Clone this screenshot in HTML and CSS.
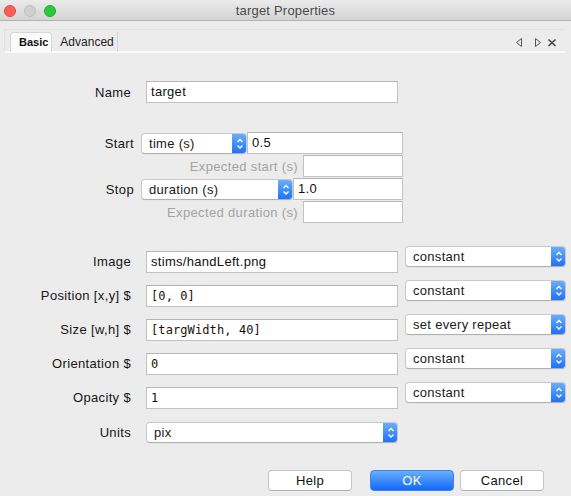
FILE: index.html
```html
<!DOCTYPE html>
<html>
<head>
<meta charset="utf-8">
<link rel="stylesheet" href="styles.css">
</head>
<body>
<div class="window">
  <header class="titlebar">
    <div class="lights">
      <span class="light red"></span>
      <span class="light gray"></span>
      <span class="light green"></span>
    </div>
    <div class="title">target Properties</div>
    <div></div>
  </header>

  <div class="tabbar">
    <div class="tabs">
      <div class="tab active">Basic</div>
      <div class="tab">Advanced</div>
    </div>
    <svg class="tabctl" width="45" height="12" viewBox="0 0 45 12">
      <polygon points="7.5,2.5 2.5,6.5 7.5,10.5" fill="none" stroke="#555" stroke-width="1"/>
      <polygon points="21.5,2.5 26.5,6.5 21.5,10.5" fill="none" stroke="#555" stroke-width="1"/>
      <path d="M34.5 3.5 L41.5 10 M41.5 3.5 L34.5 10" stroke="#444" stroke-width="1.6" fill="none"/>
    </svg>
  </div>

  <main class="form">
    <div class="row name-row">
      <label class="lbl w131">Name</label>
      <div class="input w252">target</div>
    </div>

    <div class="timing">
      <div class="row trow">
        <label class="lbl w134">Start</label>
        <div class="select s-start"><span class="stext">time (s)</span><span class="arrow"><svg width="14" height="21" viewBox="0 0 14 21"><path d="M4.5 9 L7 6.5 L9.5 9 M4.5 12.5 L7 15 L9.5 12.5" fill="none" stroke="#fff" stroke-width="1.3"/></svg></span></div>
        <div class="input i-start">0.5</div>
      </div>
      <div class="row trow">
        <label class="lbl w298 dim">Expected start (s)</label>
        <div class="input w100"></div>
      </div>
      <div class="row trow">
        <label class="lbl w134">Stop</label>
        <div class="select s-stop"><span class="stext">duration (s)</span><span class="arrow"><svg width="14" height="21" viewBox="0 0 14 21"><path d="M4.5 9 L7 6.5 L9.5 9 M4.5 12.5 L7 15 L9.5 12.5" fill="none" stroke="#fff" stroke-width="1.3"/></svg></span></div>
        <div class="input i-stop">1.0</div>
      </div>
      <div class="row trow">
        <label class="lbl w298 dim">Expected duration (s)</label>
        <div class="input w100"></div>
      </div>
    </div>

    <div class="params">
      <div class="prow">
        <label class="lbl w131">Image</label>
        <div class="input w252">stims/handLeft.png</div>
        <div class="select w161"><span class="stext">constant</span><span class="arrow"><svg width="14" height="21" viewBox="0 0 14 21"><path d="M4.5 9 L7 6.5 L9.5 9 M4.5 12.5 L7 15 L9.5 12.5" fill="none" stroke="#fff" stroke-width="1.3"/></svg></span></div>
      </div>
      <div class="prow">
        <label class="lbl w131">Position [x,y] $</label>
        <div class="input w252 mono">[0, 0]</div>
        <div class="select w161"><span class="stext">constant</span><span class="arrow"><svg width="14" height="21" viewBox="0 0 14 21"><path d="M4.5 9 L7 6.5 L9.5 9 M4.5 12.5 L7 15 L9.5 12.5" fill="none" stroke="#fff" stroke-width="1.3"/></svg></span></div>
      </div>
      <div class="prow">
        <label class="lbl w131">Size [w,h] $</label>
        <div class="input w252 mono">[targWidth, 40]</div>
        <div class="select w161"><span class="stext">set every repeat</span><span class="arrow"><svg width="14" height="21" viewBox="0 0 14 21"><path d="M4.5 9 L7 6.5 L9.5 9 M4.5 12.5 L7 15 L9.5 12.5" fill="none" stroke="#fff" stroke-width="1.3"/></svg></span></div>
      </div>
      <div class="prow">
        <label class="lbl w131">Orientation $</label>
        <div class="input w252 mono">0</div>
        <div class="select w161"><span class="stext">constant</span><span class="arrow"><svg width="14" height="21" viewBox="0 0 14 21"><path d="M4.5 9 L7 6.5 L9.5 9 M4.5 12.5 L7 15 L9.5 12.5" fill="none" stroke="#fff" stroke-width="1.3"/></svg></span></div>
      </div>
      <div class="prow">
        <label class="lbl w131">Opacity $</label>
        <div class="input w252 mono">1</div>
        <div class="select w161"><span class="stext">constant</span><span class="arrow"><svg width="14" height="21" viewBox="0 0 14 21"><path d="M4.5 9 L7 6.5 L9.5 9 M4.5 12.5 L7 15 L9.5 12.5" fill="none" stroke="#fff" stroke-width="1.3"/></svg></span></div>
      </div>
    </div>

    <div class="row units-row">
      <label class="lbl w131">Units</label>
      <div class="select w252"><span class="stext">pix</span><span class="arrow"><svg width="14" height="21" viewBox="0 0 14 21"><path d="M4.5 9 L7 6.5 L9.5 9 M4.5 12.5 L7 15 L9.5 12.5" fill="none" stroke="#fff" stroke-width="1.3"/></svg></span></div>
    </div>
  </main>

  <footer class="buttons">
    <button class="btn">Help</button>
    <button class="btn primary">OK</button>
    <button class="btn">Cancel</button>
  </footer>
</div>
</body>
</html>
```

FILE: styles.css
```css
* { box-sizing: border-box; }

html, body {
  margin: 0;
  padding: 0;
}

body {
  width: 571px;
  height: 496px;
  overflow: hidden;
  background: #ececec;
  font-family: "Liberation Sans", Arial, sans-serif;
  font-size: 13px;
  color: #111;
}

.window {
  width: 571px;
  height: 496px;
}

/* title bar */
.titlebar {
  height: 21px;
  display: grid;
  grid-template-columns: 1fr auto 1fr;
  align-items: center;
  background: linear-gradient(#ebebeb, #d4d4d4);
  border-bottom: 1px solid #b3b3b3;
}

.lights {
  display: flex;
  gap: 8px;
  padding-left: 4px;
  padding-top: 1px;
}

.light {
  width: 12px;
  height: 12px;
  border-radius: 50%;
  display: block;
}

.light.red { background: #fc5f57; border: 1px solid #e1463f; }
.light.gray { background: #d0d0d0; border: 1px solid #bdbdbd; }
.light.green { background: #2ac940; border: 1px solid #1eaa2f; }

.title {
  color: #4b4b4b;
  font-size: 13px;
  padding-top: 1px;
  letter-spacing: 0.2px;
}

/* tab bar */
.tabbar {
  margin: 8px 6px 0 4px;
  height: 24px;
  border-top: 1px solid #e2e2e2;
  border-left: 1px solid #e2e2e2;
  border-bottom: 2px solid #fbfbfb;
  display: flex;
  justify-content: space-between;
  align-items: flex-start;
}

.tabs {
  display: flex;
  padding-left: 5px;
  padding-top: 2px;
}

.tab {
  height: 20px;
  line-height: 20px;
  font-size: 12px;
  color: #222;
  padding: 0 3px 0 8px;
  border-right: 1px solid #d4d4d4;
}

.tab.active {
  background: #fbfbfb;
  border: 1px solid #d6d6d6;
  border-bottom: none;
  border-radius: 4px 4px 0 0;
  font-weight: bold;
  font-size: 11px;
  line-height: 19px;
  padding: 0 3px 0 8px;
  color: #111;
}

.tabctl {
  margin-top: 6px;
  margin-right: 6px;
}

/* form */
.form {
  display: flex;
  flex-direction: column;
}

.row {
  display: flex;
  align-items: center;
}

.lbl {
  text-align: right;
  flex: none;
  white-space: nowrap;
  letter-spacing: 0.35px;
  color: #161616;
}

.lbl.dim { color: #a3a3a3; }

.w131 { width: 131px; margin-right: 15px; }
.w134 { width: 134px; margin-right: 7px; }
.w298 { width: 298px; margin-right: 5px; }

.input {
  flex: none;
  height: 22px;
  line-height: 20px;
  background: #fff;
  border: 1px solid #c2c2c2;
  border-top-color: #b4b4b4;
  padding: 0 4px;
  white-space: nowrap;
  overflow: hidden;
  letter-spacing: 0.3px;
}

.input.mono {
  font-family: "DejaVu Sans Mono", "Liberation Mono", monospace;
  font-size: 12px;
  letter-spacing: 0.1px;
  color: #1b1207;
}

.w252 { width: 252px; }
.w100 { width: 100px; }
.w161 { width: 161px; }

.select {
  flex: none;
  height: 21px;
  display: flex;
  justify-content: space-between;
  background: #fff;
  border: 1px solid #c9c9c9;
  border-bottom-color: #b0b0b0;
  border-radius: 4px;
  overflow: hidden;
  box-shadow: 0 0.5px 0 rgba(0,0,0,0.05);
}

.stext {
  line-height: 19px;
  padding-left: 7px;
  color: #1a1a1a;
  white-space: nowrap;
  letter-spacing: 0.3px;
}

.arrow {
  flex: none;
  width: 15px;
  margin: -1px -1px -1px 0;
  background: linear-gradient(#6db2fb, #1c6ef9);
  display: flex;
  align-items: center;
  justify-content: center;
}

.name-row { margin-top: 28px; }

.timing {
  margin-top: 29px;
  display: flex;
  flex-direction: column;
  gap: 1px;
}

.trow { height: 22px; }

.s-start { width: 106px; }
.i-start { width: 156px; }
.s-stop { width: 152px; }
.i-stop { width: 110px; }

.params {
  margin-top: 23px;
  display: flex;
  flex-direction: column;
  gap: 7px;
}

.prow {
  display: flex;
  align-items: flex-start;
  height: 27px;
}

.prow .lbl {
  margin-top: 5px;
  line-height: 22px;
}

.prow .input {
  margin-top: 5px;
  margin-right: 7px;
}

.units-row {
  margin-top: 13px;
  height: 21px;
}

/* buttons */
.buttons {
  display: flex;
  padding-left: 268px;
  margin-top: 27px;
}

.btn {
  width: 84px;
  height: 21px;
  padding: 0;
  font-family: "Liberation Sans", Arial, sans-serif;
  font-size: 13px;
  letter-spacing: 0.3px;
  color: #111;
  background: #fff;
  border: 1px solid #c6c6c6;
  border-bottom-color: #b1b1b1;
  border-radius: 4px;
  margin-right: 6px;
}

.btn:first-child { margin-right: 18px; }

.btn.primary {
  background: linear-gradient(#68aefb, #1168fa);
  border-color: #3c85f5;
  color: #fff;
}
```
